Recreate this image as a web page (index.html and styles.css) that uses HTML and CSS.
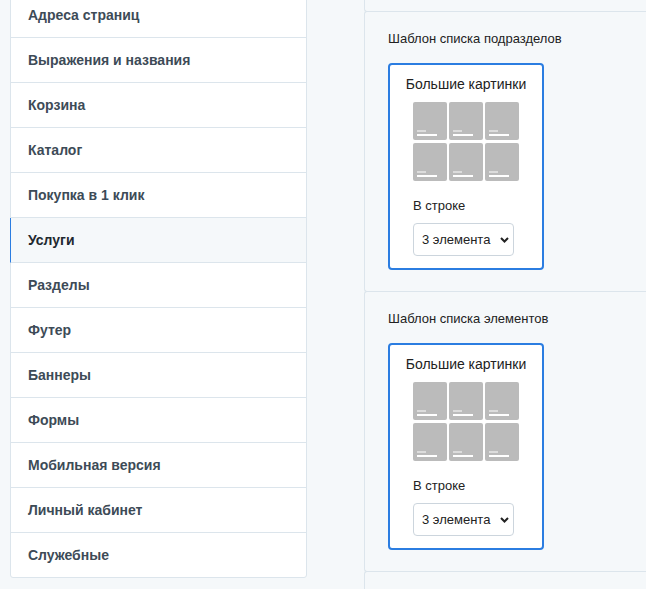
FILE: index.html
```html
<!DOCTYPE html>
<html lang="ru">
<head>
<meta charset="utf-8">
<title>Настройки</title>
<link rel="stylesheet" href="styles.css">
</head>
<body>
<div class="page">
  <nav class="menu">
    <div class="menu-item">Адреса страниц</div>
    <div class="menu-item">Выражения и названия</div>
    <div class="menu-item">Корзина</div>
    <div class="menu-item">Каталог</div>
    <div class="menu-item">Покупка в 1 клик</div>
    <div class="menu-item active">Услуги</div>
    <div class="menu-item">Разделы</div>
    <div class="menu-item">Футер</div>
    <div class="menu-item">Баннеры</div>
    <div class="menu-item">Формы</div>
    <div class="menu-item">Мобильная версия</div>
    <div class="menu-item">Личный кабинет</div>
    <div class="menu-item last">Служебные</div>
  </nav>
  <main class="content">
    <div class="tail"></div>
    <section class="section">
      <div class="section-title">Шаблон списка подразделов</div>
      <div class="card">
        <div class="card-title">Большие картинки</div>
        <div class="card-body">
          <div class="tiles">
            <div class="tile"><span class="l1"></span><span class="l2"></span></div>
            <div class="tile"><span class="l1"></span><span class="l2"></span></div>
            <div class="tile"><span class="l1"></span><span class="l2"></span></div>
            <div class="tile"><span class="l1"></span><span class="l2"></span></div>
            <div class="tile"><span class="l1"></span><span class="l2"></span></div>
            <div class="tile"><span class="l1"></span><span class="l2"></span></div>
          </div>
          <div class="label">В строке</div>
          <div class="select-wrap">
            <select class="select"><option>3 элемента</option></select>
            <svg class="chev" width="9" height="6" viewBox="0 0 9 6"><path d="M1 1 L4.5 4.5 L8 1" fill="none" stroke="#222" stroke-width="2"/></svg>
          </div>
        </div>
      </div>
    </section>
    <section class="section">
      <div class="section-title">Шаблон списка элементов</div>
      <div class="card">
        <div class="card-title">Большие картинки</div>
        <div class="card-body">
          <div class="tiles">
            <div class="tile"><span class="l1"></span><span class="l2"></span></div>
            <div class="tile"><span class="l1"></span><span class="l2"></span></div>
            <div class="tile"><span class="l1"></span><span class="l2"></span></div>
            <div class="tile"><span class="l1"></span><span class="l2"></span></div>
            <div class="tile"><span class="l1"></span><span class="l2"></span></div>
            <div class="tile"><span class="l1"></span><span class="l2"></span></div>
          </div>
          <div class="label">В строке</div>
          <div class="select-wrap">
            <select class="select"><option>3 элемента</option></select>
            <svg class="chev" width="9" height="6" viewBox="0 0 9 6"><path d="M1 1 L4.5 4.5 L8 1" fill="none" stroke="#222" stroke-width="2"/></svg>
          </div>
        </div>
      </div>
    </section>
    <section class="section"></section>
  </main>
</div>
</body>
</html>
```
FILE: styles.css
```css
* { box-sizing: border-box; }
html, body {
  margin: 0;
  padding: 0;
  background: #f5f8fa;
  font-family: "Liberation Sans", Arial, sans-serif;
  color: #222;
  overflow: hidden;
}
.page {
  display: flex;
  align-items: flex-start;
  padding-left: 10px;
  gap: 57px;
}
.menu {
  width: 297px;
  flex: none;
  margin-top: -8px;
  background: #fff;
  border: 1px solid #dce5ec;
  border-radius: 3px;
}
.menu-item {
  height: 45px;
  padding: 14px 17px;
  line-height: 16px;
  font-size: 14px;
  font-weight: bold;
  color: #3d4b57;
  border-bottom: 1px solid #dce5ec;
}
.menu-item.last {
  height: 44px;
  border-bottom: none;
}
.menu-item.active {
  background: #f5f8fa;
  color: #1f2930;
  margin-left: -1px;
  border-left: 1px solid #2b7de1;
  padding-left: 17px;
}
.content {
  flex: 1;
  margin-right: -20px;
}
.tail {
  height: 12px;
  border-left: 1px solid #dce5ec;
  border-bottom: 1px solid #dce5ec;
  border-bottom-left-radius: 3px;
}
.section {
  height: 281px;
  margin-top: -1px;
  border: 1px solid #dce5ec;
  border-right: none;
  border-radius: 3px 0 0 3px;
  padding: 19px 0 21px 23px;
}
.section-title {
  font-size: 13px;
  line-height: 16px;
  color: #222;
  margin-bottom: 16px;
}
.card {
  width: 156px;
  height: 207px;
  background: #fff;
  border: 2px solid #2b7de1;
  border-radius: 4px;
  padding-top: 11px;
}
.card-title {
  text-align: center;
  font-size: 14px;
  line-height: 16px;
  color: #222;
  margin-bottom: 10px;
}
.card-body {
  width: 106px;
  margin: 0 auto;
}
.tiles {
  display: grid;
  grid-template-columns: repeat(3, 34px);
  grid-auto-rows: 38px;
  column-gap: 2px;
  row-gap: 3px;
}
.tile {
  background: #bbbbbb;
  border-radius: 2px;
  display: flex;
  flex-direction: column;
  justify-content: flex-end;
  padding: 0 0 4px 4px;
  gap: 2px;
}
.tile .l1 {
  display: block;
  width: 9px;
  height: 2px;
  background: #dcdcdc;
}
.tile .l2 {
  display: block;
  width: 20px;
  height: 2px;
  background: #ffffff;
}
.label {
  margin-top: 17px;
  font-size: 13px;
  line-height: 15px;
  color: #222;
}
.select-wrap {
  position: relative;
  margin-top: 10px;
  width: 101px;
  height: 33px;
}
.select {
  appearance: none;
  -webkit-appearance: none;
  width: 101px;
  height: 33px;
  margin: 0;
  padding: 0 0 0 8px;
  background: #fff;
  border: 1px solid #ccd5dd;
  border-radius: 4px;
  font-family: "Liberation Sans", Arial, sans-serif;
  font-size: 13px;
  color: #222;
}
.chev {
  position: absolute;
  left: 87px;
  top: 14px;
  pointer-events: none;
}
```
